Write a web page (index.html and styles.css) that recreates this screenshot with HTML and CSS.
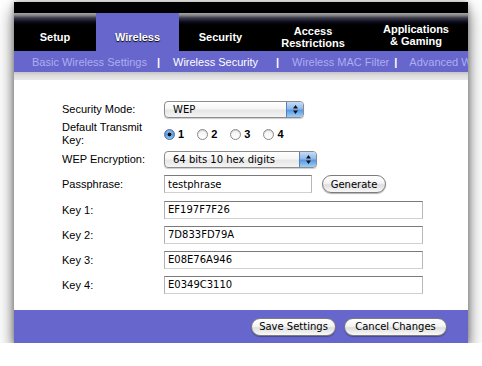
FILE: index.html
```html
<!DOCTYPE html>
<html lang="en">
<head>
    <meta charset="UTF-8">
    <title>Wireless Security</title>
    <link rel="stylesheet" href="styles.css">
</head>
<body>
    <div class="window">
        <div class="topbar"></div>
        <ul class="tabs">
            <li class="tab t-setup">Setup</li>
            <li class="tab t-wireless active">Wireless</li>
            <li class="tab t-security">Security</li>
            <li class="tab t-access">Access<br>Restrictions</li>
            <li class="tab t-apps">Applications<br>&amp; Gaming</li>
        </ul>
        <div class="subnav">
            <span class="sub">Basic Wireless Settings</span>
            <span class="sep s1">|</span>
            <span class="sub current">Wireless Security</span>
            <span class="sep s2">|</span>
            <span class="sub">Wireless MAC Filter</span>
            <span class="sep s3">|</span>
            <span class="sub">Advanced Wireless Settings</span>
        </div>
        <div class="shade"></div>

        <form class="settings">
            <label>Security Mode:</label>
            <div class="popup mode">
                <span class="value">WEP</span>
                <span class="arrows">
                    <svg width="7" height="11" viewBox="0 0 7 11"><path d="M3.5 1 L6 4.5 L1 4.5 Z M3.5 10 L6 6.5 L1 6.5 Z" fill="#111"/></svg>
                </span>
            </div>

            <label class="two">Default Transmit Key:</label>
            <div class="radios">
                <label class="radio"><input type="radio" name="key" checked> 1</label>
                <label class="radio"><input type="radio" name="key"> 2</label>
                <label class="radio"><input type="radio" name="key"> 3</label>
                <label class="radio"><input type="radio" name="key"> 4</label>
            </div>

            <label>WEP Encryption:</label>
            <div class="popup enc">
                <span class="value">64 bits 10 hex digits</span>
                <span class="arrows">
                    <svg width="7" height="11" viewBox="0 0 7 11"><path d="M3.5 1 L6 4.5 L1 4.5 Z M3.5 10 L6 6.5 L1 6.5 Z" fill="#111"/></svg>
                </span>
            </div>

            <label>Passphrase:</label>
            <div class="inline">
                <input class="field short" type="text" value="testphrase">
                <button type="button" class="aqua generate">Generate</button>
            </div>

            <label>Key 1:</label>
            <input class="field" type="text" value="EF197F7F26">
            <label>Key 2:</label>
            <input class="field" type="text" value="7D833FD79A">
            <label>Key 3:</label>
            <input class="field" type="text" value="E08E76A946">
            <label>Key 4:</label>
            <input class="field" type="text" value="E0349C3110">
        </form>

        <div class="footer">
            <button type="button" class="aqua save">Save Settings</button>
            <button type="button" class="aqua cancel">Cancel Changes</button>
        </div>
    </div>
</body>
</html>
```

FILE: styles.css
```css
body{
    margin: 0;
    background-color: #fff;
    font-family: "Liberation Sans", Arial, sans-serif;
    font-size: 11px;
}
.window{
    margin: 2px 0 0 14px;
    width: 454px;
    height: 341px;
    overflow: hidden;
    background-color: #fff;
    box-shadow: 0 8px 16px rgba(0,0,0,0.6), 0 0 6px rgba(0,0,0,0.3);
}
.topbar{
    height: 11px;
    background-color: #000;
}
.tabs{
    display: flex;
    margin: 0;
    padding: 0;
    list-style: none;
    height: 38px;
    background: linear-gradient(#a4a4a4 0px, #8c8c90 2px, #3a3a48 5px, #0a0a1c 9px, #000 12px);
}
.tab{
    box-sizing: border-box;
    padding-top: 9px;
    display: flex;
    align-items: center;
    justify-content: center;
    text-align: center;
    color: #fff;
    font-weight: bold;
    line-height: 12px;
    text-shadow: 0 1px 1px #000;
}
.t-setup{ width: 82px; }
.t-wireless{ width: 83px; }
.t-security{ width: 83px; }
.t-access{ width: 102px; }
.t-apps{ flex: 1; padding-top: 5px; }
.tab.active{
    background-color: #6666cc;
}
.subnav{
    height: 21px;
    display: flex;
    align-items: center;
    padding-left: 18px;
    background-color: #6666cc;
    white-space: nowrap;
    color: #adadf0;
}
.sub.current{
    color: #fff;
}
.sep{
    color: #fff;
    font-weight: bold;
}
.s1{ margin: 0 13px 0 10px; }
.s2{ margin: 0 13px 0 18px; }
.s3{ margin: 0 12px 0 5px; }
.shade{
    height: 8px;
    background: linear-gradient(#c4c4c4, #dcdcdc 40%, #e8e8e8);
}

.settings{
    box-sizing: border-box;
    height: 230px;
    margin: 0;
    padding: 17px 0 0 48px;
    display: grid;
    grid-template-columns: 102px auto;
    grid-template-rows: 24px 26px 24px 26px 25px 25px 25px 25px;
    align-items: center;
    justify-items: start;
}
.settings > label{
    color: #000;
}
.settings .two{
    width: 92px;
    line-height: 13px;
}
.popup{
    box-sizing: border-box;
    display: flex;
    height: 17px;
    border: 1px solid #8c8c8c;
    border-radius: 4px;
    background: linear-gradient(#ffffff, #f6f6f6 45%, #e6e6e6 55%, #f4f4f4);
    box-shadow: 0 1px 1px rgba(0,0,0,0.2);
    font-family: "DejaVu Sans", sans-serif;
    font-size: 10px;
    overflow: hidden;
}
.popup.mode{ width: 140px; }
.popup.enc{ width: 153px; }
.popup .value{
    flex: 1;
    padding-left: 8px;
    line-height: 15px;
}
.popup .arrows{
    width: 16px;
    display: flex;
    align-items: center;
    justify-content: center;
    border-left: 1px solid #5a7fb8;
    background: linear-gradient(#c4dcf6, #8fbaec 45%, #5b98e0 55%, #9cd0f8);
}
.radios{
    display: flex;
    gap: 13px;
}
.radio{
    display: flex;
    align-items: center;
    font-weight: bold;
}
.radio input{
    appearance: none;
    -webkit-appearance: none;
    margin: 0 3px 0 0;
    width: 11px;
    height: 11px;
    border-radius: 50%;
    border: 1px solid #8a8a8a;
    background: linear-gradient(#f2f2f2, #ffffff);
    box-shadow: inset 0 1px 1px rgba(0,0,0,0.15);
}
.radio input:checked{
    border-color: #4a6ea8;
    background: radial-gradient(circle, #111 0, #111 1.6px, transparent 2.2px),
                linear-gradient(#9cc4f0, #5e9ae0 50%, #8ec8f6);
}
.inline{
    display: flex;
    align-items: center;
}
.field{
    box-sizing: border-box;
    width: 259px;
    height: 18px;
    margin: 0;
    padding: 0 3px;
    border: 1px solid;
    border-color: #7a7a7a #b8b8b8 #d0d0d0 #b0b0b0;
    font-family: "DejaVu Sans", sans-serif;
    font-size: 10px;
    color: #000;
    background-color: #fff;
}
.field.short{
    width: 148px;
}
.aqua{
    box-sizing: border-box;
    height: 18px;
    padding: 0;
    border: 1px solid #7c7c7c;
    border-radius: 9px;
    background: linear-gradient(#ffffff, #f4f4f4 45%, #dedede 55%, #f8f8f8);
    box-shadow: 0 1px 1px rgba(0,0,0,0.3);
    font-family: "DejaVu Sans", sans-serif;
    font-size: 10px;
    color: #000;
}
.generate{
    width: 64px;
    margin-left: 10px;
}
.footer{
    height: 33px;
    display: flex;
    align-items: center;
    justify-content: flex-end;
    gap: 8px;
    padding-right: 21px;
    background-color: #6666cc;
}
.save{ width: 85px; }
.cancel{ width: 103px; }
```
